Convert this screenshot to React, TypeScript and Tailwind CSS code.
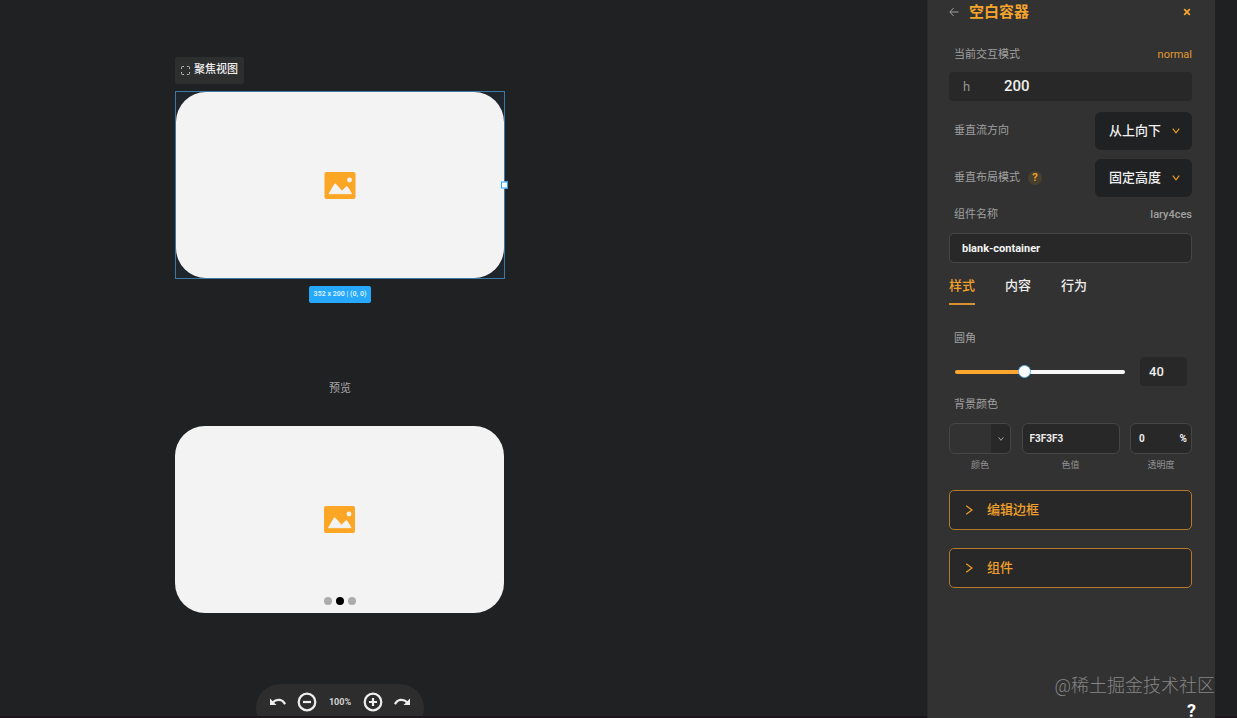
import React, { useState } from 'react';

type IconProps = { className?: string };

const PictureIcon = ({ className }: IconProps) => (
  <svg viewBox="0 0 31 27" className={className} aria-hidden="true">
    <rect width="31" height="27" rx="2" fill="#fca625" />
    <circle cx="25" cy="8" r="2.4" fill="#f3f3f3" />
    <path
      d="M4.6 21.700 9.800 12.600Q10.700 11.200 11.700 12.600L17.500 19.200 21.300 15.200Q22.500 14 23.400 15.500L27 21.700Z"
      fill="#f3f3f3"
      stroke="#f3f3f3"
      strokeWidth="0.9"
      strokeLinejoin="round"
    />
  </svg>
);

const FocusIcon = ({ className }: IconProps) => (
  <svg viewBox="0 0 9 9" fill="none" stroke="currentColor" className={className} aria-hidden="true">
    <path d="M.5 3V1.500Q.5.5 1.500.5H3M6 .5H7.500Q8.500.5 8.500 1.500V3M8.500 6V7.500Q8.500 8.500 7.500 8.500H6M3 8.500H1.500Q.5 8.500.5 7.500V6" />
  </svg>
);

const ChevronDown = ({ className }: IconProps) => (
  <svg viewBox="0 0 8 8" fill="none" stroke="currentColor" strokeWidth="1.100" className={className} aria-hidden="true">
    <path d="M.8 1.700 4 5.800 7.200 1.700" />
  </svg>
);

const ChevronRight = ({ className }: IconProps) => (
  <svg viewBox="0 0 8 10" fill="none" stroke="currentColor" strokeWidth="1.200" className={className} aria-hidden="true">
    <path d="M1.200.8 7 5 1.200 9.200" />
  </svg>
);

const BackIcon = ({ className }: IconProps) => (
  <svg viewBox="0 0 10 10" fill="none" stroke="currentColor" className={className} aria-hidden="true">
    <path d="M9.500 5H1M4.600 1 .8 5l3.800 4" />
  </svg>
);

const CloseIcon = ({ className }: IconProps) => (
  <svg viewBox="0 0 8 8" fill="none" stroke="currentColor" strokeWidth="1.800" className={className} aria-hidden="true">
    <path d="M1.200 1.200 6.800 6.800M6.800 1.200 1.200 6.800" />
  </svg>
);

const UndoIcon = ({ className }: IconProps) => (
  <svg viewBox="0 0 16 8" className={className} aria-hidden="true">
    <path d="M0 .5V7H6.500Z" fill="currentColor" />
    <path d="M2.600 4.500C6.500 .6 12.500 .8 15 6.200" fill="none" stroke="currentColor" strokeWidth="2.200" />
  </svg>
);

const CircleIcon = ({ plus }: { plus?: boolean }) => (
  <svg viewBox="0 0 20 20" fill="none" stroke="currentColor" strokeWidth="2.200" className="size-5" aria-hidden="true">
    <circle cx="10" cy="10" r="8.300" />
    <path d={plus ? 'M6 10H14M10 6V14' : 'M6 10H14'} />
  </svg>
);

const Toolbar = () => (
  <div className="flex h-12 w-[168px] items-start justify-between rounded-3xl bg-[#2d2d2d] px-3.5 pt-2 text-[#eeeeee]">
    <button type="button" aria-label="undo" className="flex h-5 items-center">
      <UndoIcon className="h-2 w-4" />
    </button>
    <button type="button" aria-label="zoom out">
      <CircleIcon />
    </button>
    <span className="text-[9px] leading-5 font-bold text-[#d4d4d4]">100%</span>
    <button type="button" aria-label="zoom in">
      <CircleIcon plus />
    </button>
    <button type="button" aria-label="redo" className="flex h-5 items-center">
      <UndoIcon className="h-2 w-4 -scale-x-100" />
    </button>
  </div>
);

const Canvas = () => (
  <main className="min-w-0 flex-1 overflow-hidden pt-[57px] pl-[175px]">
    <div className="flex w-[330px] flex-col items-center">
      <button
        type="button"
        className="flex h-[27px] items-center gap-1 self-start rounded-xs bg-[#2d2e2e] px-1.5 text-[#eeeeee]"
      >
        <FocusIcon className="size-[9px] text-[#bbbbbb]" />
        <span className="pb-0.5 text-[11px] leading-4 font-medium">聚焦视图</span>
      </button>

      <div className="relative mt-[7px] h-[188px] w-full border border-[#3c79a5] bg-[#1e252c]">
        <div className="flex h-full items-center justify-center rounded-[30px] bg-[#f3f3f3]">
          <PictureIcon className="h-[27px] w-8" />
        </div>
        <span className="absolute top-1/2 -right-1 size-[7px] -translate-y-1/2 border border-[#26a5f7] bg-white" />
      </div>
      <div className="mt-[7px] h-[17px] rounded-xs bg-[#26a9fc] px-[5px] text-[7px] leading-[17px] font-bold whitespace-nowrap text-[#d5efff]">
        352 x 200 | (0, 0)
      </div>

      <h2 className="mt-[78px] text-[11px] leading-4 text-[#a8a8a8]">预览</h2>
      <div className="relative mt-[29px] flex h-[187px] w-[329px] items-center justify-center self-start rounded-[30px] bg-[#f3f3f3]">
        <PictureIcon className="h-[27px] w-[31px]" />
        <div className="absolute bottom-2 flex gap-1">
          <span className="size-2 rounded-full bg-[#acacac]" />
          <span className="size-2 rounded-full bg-black" />
          <span className="size-2 rounded-full bg-[#acacac]" />
        </div>
      </div>

      <div className="mt-[71px]">
        <Toolbar />
      </div>
    </div>
  </main>
);

type SelectRowProps = { id: string; label: string; value: string; help?: boolean };

const SelectRow = ({ id, label, value, help }: SelectRowProps) => (
  <div className="flex h-[38px] items-center justify-between">
    <div className="flex items-center gap-2 pl-[5px]">
      <label htmlFor={id} className="text-[11px] leading-4 text-[#a0a0a0]">
        {label}
      </label>
      {help && (
        <button
          type="button"
          aria-label="help"
          className="size-3.5 rounded-full bg-[#48402e] text-center text-[11px] leading-[14px] font-bold text-[#f5a124]"
        >
          ?
        </button>
      )}
    </div>
    <div className="relative">
      <select
        id={id}
        className="h-[38px] w-[97px] appearance-none rounded-md bg-[#1f2122] pl-3.5 text-[13px] font-medium text-[#f0f0f0]"
      >
        <option>{value}</option>
      </select>
      <ChevronDown className="pointer-events-none absolute top-[15px] right-3 size-2 text-[#f5a124]" />
    </div>
  </div>
);

const Collapse = ({ title }: { title: string }) => (
  <button
    type="button"
    className="flex h-10 w-full items-center gap-3.5 rounded-[5px] border border-[#b37a2a] bg-[#282828] px-[15px] text-[13px] font-medium text-[#f0a02a]"
  >
    <ChevronRight className="h-2.5 w-2" />
    {title}
  </button>
);

const tabs = ['样式', '内容', '行为'];

const Panel = () => {
  const [activeTab, setActiveTab] = useState('样式');
  const [radius, setRadius] = useState(40);

  return (
    <aside className="relative w-72 shrink-0 overflow-hidden border-l border-[#292a2a] bg-[#323232] pr-[23px] pl-[21px]">
      <header className="flex h-6 items-center text-[#f5a42c]">
        <button type="button" aria-label="back" className="text-[#a0a0a0]">
          <BackIcon className="size-2.5" />
        </button>
        <h1 className="ml-2.5 text-[15px] leading-6 font-bold">空白容器</h1>
        <button type="button" aria-label="close" className="mr-px ml-auto">
          <CloseIcon className="size-2" />
        </button>
      </header>

      <div className="mt-[23px] flex justify-between pl-[5px] text-[11px] leading-4">
        <span className="text-[#a0a0a0]">当前交互模式</span>
        <span className="text-[#e09a30]">normal</span>
      </div>
      <div className="mt-[9px] flex h-[29px] items-center rounded-sm bg-[#282828] px-3.5">
        <label htmlFor="height" className="w-[41px] text-[13px] text-[#929292]">
          h
        </label>
        <input
          id="height"
          defaultValue="200"
          className="min-w-0 flex-1 bg-transparent text-[15px] font-medium text-[#eeeeee] outline-none"
        />
      </div>

      <div className="mt-[11px] flex flex-col gap-[9px]">
        <SelectRow id="direction" label="垂直流方向" value="从上向下" />
        <SelectRow id="layout" label="垂直布局模式" value="固定高度" help />
      </div>

      <div className="mt-2.5 flex justify-between pl-[5px] text-[11px] leading-4 text-[#a0a0a0]">
        <label htmlFor="name">组件名称</label>
        <span className="font-medium">lary4ces</span>
      </div>
      <input
        id="name"
        defaultValue="blank-container"
        className="mt-2.5 block h-[30px] w-full rounded-[5px] border border-[#464646] bg-[#282828] px-3 text-[11px] font-bold text-[#f3f3f3] outline-none"
      />

      <nav className="mt-[13px] flex gap-[30px]">
        {tabs.map(tab => (
          <button
            key={tab}
            type="button"
            onClick={() => setActiveTab(tab)}
            className={
              tab === activeTab
                ? 'h-[29px] border-b-2 border-[#d5922e] pb-2 text-[13px] leading-[18px] font-medium text-[#f0a02a]'
                : 'h-[29px] border-b-2 border-transparent pb-2 text-[13px] leading-[18px] font-medium text-[#eeeeee]'
            }
          >
            {tab}
          </button>
        ))}
      </nav>

      <label htmlFor="radius" className="mt-[26px] block pl-[5px] text-[11px] leading-4 text-[#a0a0a0]">
        圆角
      </label>
      <div className="mt-2.5 flex items-center justify-between pr-[5px] pl-1.5">
        <input
          id="radius"
          type="range"
          min={0}
          max={100}
          value={radius}
          onChange={e => setRadius(Number(e.target.value))}
          style={{ backgroundImage: `linear-gradient(to right, #fca62e ${radius}%, #f8f8f8 ${radius}%)` }}
          className="h-1 w-[170px] appearance-none rounded-full [&::-webkit-slider-thumb]:size-[13px] [&::-webkit-slider-thumb]:appearance-none [&::-webkit-slider-thumb]:rounded-full [&::-webkit-slider-thumb]:border [&::-webkit-slider-thumb]:border-solid [&::-webkit-slider-thumb]:border-[#58b0ee] [&::-webkit-slider-thumb]:bg-white"
        />
        <input
          aria-label="圆角"
          value={radius}
          onChange={e => setRadius(Number(e.target.value) || 0)}
          className="h-[29px] w-[47px] rounded-sm bg-[#282828] px-[9px] text-[13px] font-medium text-[#eeeeee] outline-none"
        />
      </div>

      <h2 className="mt-[11px] pl-[5px] text-[11px] leading-4 text-[#a0a0a0]">背景颜色</h2>
      <div className="mt-2.5 flex justify-between text-center text-[9px] leading-3 text-[#929292]">
        <div className="w-[62px]">
          <button
            id="color"
            type="button"
            className="flex h-[31px] w-full justify-end overflow-hidden rounded-md border border-[#464646]"
          >
            <span className="flex h-full w-[19px] items-center justify-center bg-[#282828]">
              <ChevronDown className="size-1.5 text-[#b8b8b8]" />
            </span>
          </button>
          <label htmlFor="color" className="mt-[5px] block">
            颜色
          </label>
        </div>
        <div className="w-[98px]">
          <input
            id="hex"
            defaultValue="F3F3F3"
            className="block h-[31px] w-full rounded-md border border-[#464646] bg-[#282828] px-[7px] text-[10px] font-bold text-[#eeeeee] outline-none"
          />
          <label htmlFor="hex" className="mt-[5px] block">
            色值
          </label>
        </div>
        <div className="w-[62px]">
          <div className="flex h-[31px] items-center rounded-md border border-[#464646] bg-[#282828] pr-1 pl-2 text-[10px] font-bold text-[#eeeeee]">
            <input id="alpha" defaultValue="0" className="min-w-0 flex-1 bg-transparent outline-none" />
            <span>%</span>
          </div>
          <label htmlFor="alpha" className="mt-[5px] block">
            透明度
          </label>
        </div>
      </div>

      <div className="mt-[19px] flex flex-col gap-[18px]">
        <Collapse title="编辑边框" />
        <Collapse title="组件" />
      </div>

      <p className="absolute right-0 bottom-5 text-lg leading-6 font-light whitespace-nowrap text-[#858585]">@稀土掘金技术社区</p>
      <button
        type="button"
        aria-label="help center"
        className="absolute right-[19px] bottom-0 text-lg leading-[14px] font-bold text-white"
      >
        ?
      </button>
    </aside>
  );
};

export default function App() {
  return (
    <div className="flex h-screen flex-col overflow-hidden bg-[#1f2122] font-[Roboto,'Noto_Sans_CJK_SC',sans-serif]">
      <div className="flex min-h-0 flex-1">
        <Canvas />
        <Panel />
        <div className="w-[22px] shrink-0 bg-[#1e2022]" />
      </div>
      <div className="-mt-0.5 h-0.5 shrink-0 bg-[#21151d]" />
    </div>
  );
}
